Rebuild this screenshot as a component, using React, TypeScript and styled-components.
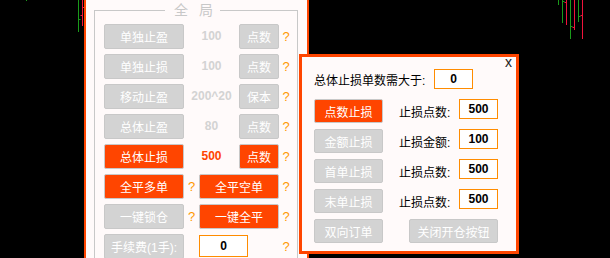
import React from "react";
import styled, { createGlobalStyle } from "styled-components";

const GlobalStyle = createGlobalStyle`
  body {
    margin: 0;
    background: #000;
    font-family: "Liberation Sans", "Noto Sans CJK SC", sans-serif;
  }
`;

const FONT = `"Liberation Sans", "Noto Sans CJK SC", sans-serif`;
const ORANGE = "#ff4500";

const Page = styled.div`
  position: relative;
  display: flex;
  width: 610px;
  height: 258px;
  overflow: hidden;
  background: #000;
`;

const ChartSide = styled.div<{ $w?: number }>`
  flex: ${(p) => (p.$w ? `0 0 ${p.$w}px` : "1 1 auto")};
  height: 100%;
`;

const Panel = styled.div`
  flex: 0 0 225px;
  box-sizing: border-box;
  height: 100%;
  border-left: 2px solid ${ORANGE};
  border-right: 2px solid ${ORANGE};
  background: #fffafa;
`;

const Group = styled.fieldset`
  margin: 0 9px 0 8px;
  padding: 4px 4px 0 9px;
  min-width: 0;
  height: 300px;
  border: 1px solid #c8c8c8;
`;

const Legend = styled.legend`
  margin-left: 61px;
  padding: 0 4px 0 9px;
  font-size: 14px;
  line-height: 20px;
  letter-spacing: 3.5px;
  color: #c8c8c8;
`;

const Grid = styled.div`
  display: grid;
  grid-template-columns: 80px 15px 40px 40px 14px;
  grid-auto-rows: 25px;
  row-gap: 5px;
`;

const Btn = styled.button<{ $on?: boolean; $span?: number; $w?: number }>`
  box-sizing: border-box;
  height: ${(p) => (p.$w ? 24 : 25)}px;
  width: ${(p) => (p.$w ? `${p.$w}px` : "auto")};
  grid-column: span ${(p) => p.$span ?? 1};
  padding: 0;
  border: 1px solid #c8c8c8;
  border-radius: 2px;
  background: ${(p) => (p.$on ? ORANGE : "#d3d3d3")};
  color: #fff;
  font-family: ${FONT};
  font-size: 12px;
  white-space: nowrap;
`;

const Value = styled.div<{ $on?: boolean }>`
  grid-column: span 2;
  text-align: center;
  line-height: 25px;
  font-size: 12px;
  font-weight: bold;
  color: ${(p) => (p.$on ? ORANGE : "#d3d3d3")};
`;

const Q = styled.div<{ $col?: number }>`
  grid-column: ${(p) => p.$col ?? "auto"};
  text-align: center;
  line-height: 25px;
  font-size: 13px;
  color: #f90;
`;

const Field = styled.input<{ $w: number; $h: number }>`
  box-sizing: border-box;
  width: ${(p) => p.$w}px;
  height: ${(p) => p.$h}px;
  padding: 0;
  border: 1px solid #ff8c00;
  background: #fff;
  color: #000;
  text-align: center;
  font-family: ${FONT};
  font-size: 12px;
  font-weight: bold;
  outline: none;
`;

const FeeField = styled(Field)`
  grid-column: 3 / span 2;
  margin-top: 1px;
`;

const Dialog = styled.div`
  position: absolute;
  left: 299px;
  top: 54px;
  width: 220px;
  height: 200px;
  box-sizing: border-box;
  border: 3px solid ${ORANGE};
  background: #fffafa;
  padding: 12px 0 0 12px;
  display: flex;
  flex-direction: column;
  gap: 6px;
`;

const Close = styled.div`
  position: absolute;
  top: -3px;
  right: 4px;
  font-size: 14px;
  line-height: 16px;
  color: #222;
`;

const DRow = styled.div<{ $h: number; $after?: number }>`
  display: flex;
  align-items: center;
  height: ${(p) => p.$h}px;
  margin-bottom: ${(p) => p.$after ?? 0}px;
`;

const Label = styled.div<{ $w: number; $ml?: number }>`
  width: ${(p) => p.$w}px;
  margin-left: ${(p) => p.$ml ?? 0}px;
  font-size: 12px;
  color: #000;
  white-space: nowrap;
`;

const TopField = styled(Field)`
  align-self: flex-start;
`;

type Candle = { x: number; y: number; up: boolean; ticks?: [number, number][] };

const leftCandles: Candle[] = [
  { x: 26, y: 1, up: true },
  { x: 78, y: 32, up: true, ticks: [[19, 1]] },
  { x: 82, y: 26, up: false, ticks: [[15, -1], [7, 1]] },
];

const rightCandles: Candle[] = [
  { x: 249, y: 5, up: true },
  { x: 253, y: 23, up: true, ticks: [[1, 1]] },
  { x: 257, y: 25, up: false, ticks: [[2, -1]] },
  { x: 261, y: 39, up: true, ticks: [[26, 1]] },
  { x: 265, y: 30, up: false, ticks: [[27, -1]] },
  { x: 269, y: 22, up: true, ticks: [[16, 1]] },
  { x: 273, y: 39, up: false, ticks: [[15, -1]] },
];

function Candles({ items }: { items: Candle[] }) {
  return (
    <svg width="100%" height="100%">
      {items.map((c, i) => {
        const col = c.up ? "#1a9a1a" : "#f0143c";
        return (
          <g key={i} stroke={col} strokeWidth={1}>
            <line x1={c.x + 0.5} y1={0} x2={c.x + 0.5} y2={c.y} />
            {c.ticks?.map(([ty, d], j) => (
              <line key={j} x1={c.x + 0.5} y1={ty + 0.5} x2={c.x + 0.5 + d * 2} y2={ty + 0.5} />
            ))}
          </g>
        );
      })}
    </svg>
  );
}

const rows = [
  { name: "单独止盈", val: "100", unit: "点数" },
  { name: "单独止损", val: "100", unit: "点数" },
  { name: "移动止盈", val: "200^20", unit: "保本" },
  { name: "总体止盈", val: "80", unit: "点数" },
  { name: "总体止损", val: "500", unit: "点数", on: true },
];

const stops = [
  { name: "点数止损", label: "止损点数:", val: "500", on: true },
  { name: "金额止损", label: "止损金额:", val: "100" },
  { name: "首单止损", label: "止损点数:", val: "500" },
  { name: "末单止损", label: "止损点数:", val: "500" },
];

export default function App() {
  return (
    <Page>
      <GlobalStyle />
      <ChartSide $w={84}>
        <Candles items={leftCandles} />
      </ChartSide>
      <Panel>
        <Group>
          <Legend>全 局</Legend>
          <Grid>
            {rows.map((r) => (
              <React.Fragment key={r.name}>
                <Btn $on={r.on}>{r.name}</Btn>
                <Value $on={r.on}>{r.val}</Value>
                <Btn $on={r.on}>{r.unit}</Btn>
                <Q>?</Q>
              </React.Fragment>
            ))}
            <Btn $on>全平多单</Btn>
            <Q>?</Q>
            <Btn $on $span={2}>全平空单</Btn>
            <Q>?</Q>
            <Btn>一键锁仓</Btn>
            <Q>?</Q>
            <Btn $on $span={2}>一键全平</Btn>
            <Q>?</Q>
            <Btn>手续费(1手):</Btn>
            <FeeField $w={49} $h={22} readOnly value="0" />
            <Q $col={5}>?</Q>
          </Grid>
        </Group>
      </Panel>
      <ChartSide>
        <Candles items={rightCandles} />
      </ChartSide>

      <Dialog>
        <Close>x</Close>
        <DRow $h={20} $after={4}>
          <Label $w={120}>总体止损单数需大于:</Label>
          <Field $w={39} $h={20} readOnly value="0" />
        </DRow>
        {stops.map((s) => (
          <DRow key={s.name} $h={24}>
            <Btn $on={s.on} $w={69}>{s.name}</Btn>
            <Label $w={60} $ml={16}>{s.label}</Label>
            <TopField $w={39} $h={20} readOnly value={s.val} />
          </DRow>
        ))}
        <DRow $h={24}>
          <Btn $w={69}>双向订单</Btn>
          <Label $w={26} />
          <Btn $w={89}>关闭开仓按钮</Btn>
        </DRow>
      </Dialog>
    </Page>
  );
}
